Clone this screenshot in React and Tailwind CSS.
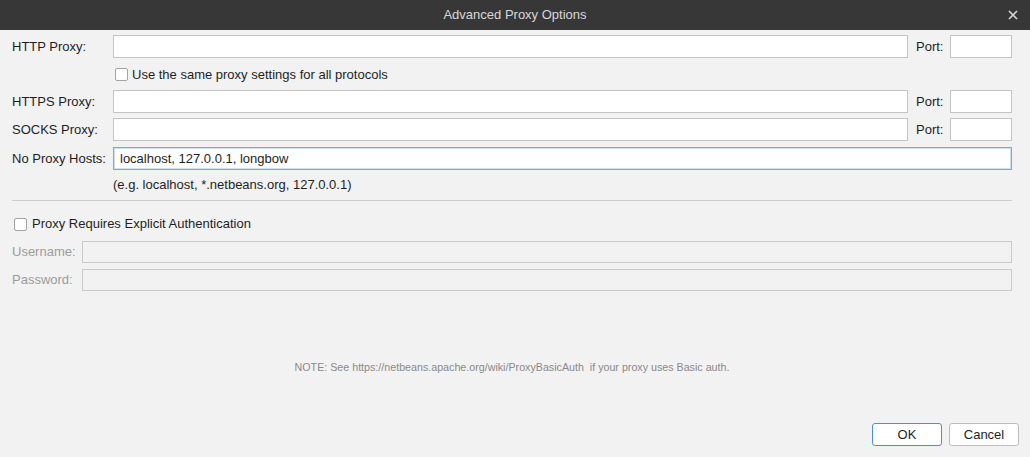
import React from "react";

const FONT = { fontFamily: '"Liberation Sans", Arial, sans-serif' };

function TextBox({ value = "", className = "", focused = false, disabled = false, short = false }) {
  const border = focused
    ? "border-[#7ea6d6] shadow-[inset_0_0_0_1px_#cfe0f3] bg-white"
    : disabled
    ? "border-[#cacaca] bg-[#f2f2f2]"
    : "border-[#c4c4c4] bg-white";
  return (
    <div className={`${short ? "h-[22px]" : "h-[23px]"} border flex items-center px-[6px] text-[13px] text-[#1e1e1e] ${border} ${className}`}>
      {value}
    </div>
  );
}

function CheckBox() {
  return <span className="inline-block w-[13px] h-[13px] rounded-[2px] border border-[#a3a3a3] bg-white" />;
}

function ProxyRow({ label, withPort = true, value, focused, className = "" }) {
  return (
    <div className={`flex items-center ${className}`}>
      <span className="w-[101px] shrink-0 text-[13px] text-[#1e1e1e]">{label}</span>
      <TextBox value={value} focused={focused} className="flex-1" />
      {withPort && (
        <>
          <span className="ml-[8px] w-[34px] text-[13px] text-[#1e1e1e]">Port:</span>
          <TextBox className="w-[62px]" />
        </>
      )}
    </div>
  );
}

export default function App() {
  return (
    <div className="w-[1030px] h-[457px] flex flex-col bg-[#f2f2f2] overflow-hidden" style={FONT}>
      <div className="h-[30px] shrink-0 bg-[#373737] relative flex items-center justify-center">
        <span className="text-[13px] text-[#d8d8d8]">Advanced Proxy Options</span>
        <svg className="absolute right-[12px] top-[10px]" width="10" height="10" viewBox="0 0 10 10">
          <path d="M1 1 L9 9 M9 1 L1 9" stroke="#d6d6d6" strokeWidth="1.7" />
        </svg>
      </div>

      <div className="flex-1 flex flex-col pl-[12px] pr-[18px] pt-[5px]">
        <ProxyRow label="HTTP Proxy:" />
        <div className="flex items-center gap-[4px] pl-[103px] mt-[9px] h-[14px]">
          <CheckBox />
          <span className="text-[13px] text-[#1e1e1e] pt-[2px]">Use the same proxy settings for all protocols</span>
        </div>
        <ProxyRow label="HTTPS Proxy:" className="mt-[9px]" />
        <ProxyRow label="SOCKS Proxy:" className="mt-[5px]" />
        <ProxyRow label="No Proxy Hosts:" withPort={false} value="localhost, 127.0.0.1, longbow" focused className="mt-[6px]" />
        <div className="pl-[101px] mt-[7px] text-[13px] text-[#1e1e1e] leading-[16px]">(e.g. localhost, *.netbeans.org, 127.0.0.1)</div>

        <div className="mt-[7px] h-px bg-[#cdcdcd]" />

        <div className="flex items-center gap-[5px] pl-[2px] mt-[16px] h-[14px]">
          <CheckBox />
          <span className="text-[13px] text-[#1e1e1e]">Proxy Requires Explicit Authentication</span>
        </div>
        <div className="flex items-center mt-[10px]">
          <span className="w-[70px] shrink-0 text-[13px] text-[#9c9c9c]">Username:</span>
          <TextBox disabled short className="flex-1" />
        </div>
        <div className="flex items-center mt-[6px]">
          <span className="w-[70px] shrink-0 text-[13px] text-[#9c9c9c]">Password:</span>
          <TextBox disabled short className="flex-1" />
        </div>

        <div className="mt-[68px] text-center text-[10.7px] text-[#8a8a8a]">
          NOTE: See https://netbeans.apache.org/wiki/ProxyBasicAuth&nbsp; if your proxy uses Basic auth.
        </div>

        <div className="mt-auto mb-[11px] flex justify-end gap-[7px] -mr-[7px]">
          <button className="w-[70px] h-[23px] rounded-[3px] border border-[#4a8fdc] bg-white text-[13px] text-[#1e1e1e]">OK</button>
          <button className="w-[70px] h-[23px] rounded-[3px] border border-[#bcbcbc] bg-white text-[13px] text-[#1e1e1e]">Cancel</button>
        </div>
      </div>
    </div>
  );
}
